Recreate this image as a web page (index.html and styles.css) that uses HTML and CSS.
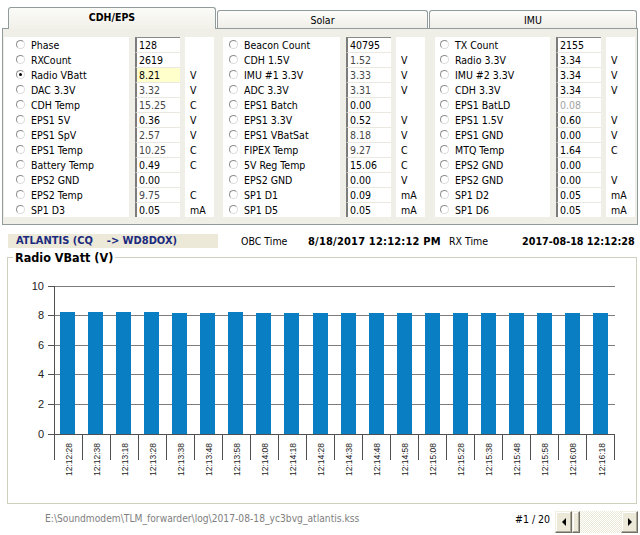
FILE: index.html
```html
<!DOCTYPE html>
<html>
<head>
<meta charset="utf-8">
<link rel="stylesheet" href="styles.css">
</head>
<body>
<div class="tabs">
  <div class="tab tab-active">CDH/EPS</div>
  <div class="tab tab-solar">Solar</div>
  <div class="tab tab-imu">IMU</div>
</div>
<div class="panel">
  <div class="col c1">
    <ul class="labels">
      <li><span class="radio"></span>Phase</li>
      <li><span class="radio"></span>RXCount</li>
      <li><span class="radio on"></span>Radio VBatt</li>
      <li><span class="radio"></span>DAC 3.3V</li>
      <li><span class="radio"></span>CDH Temp</li>
      <li><span class="radio"></span>EPS1 5V</li>
      <li><span class="radio"></span>EPS1 SpV</li>
      <li><span class="radio"></span>EPS1 Temp</li>
      <li><span class="radio"></span>Battery Temp</li>
      <li><span class="radio"></span>EPS2 GND</li>
      <li><span class="radio"></span>EPS2 Temp</li>
      <li><span class="radio"></span>SP1 D3</li>
    </ul>
    <div class="values">
      <div class="val first">128</div>
      <div class="val">2619</div>
      <div class="val sel">8.21</div>
      <div class="val dim">3.32</div>
      <div class="val dim">15.25</div>
      <div class="val">0.36</div>
      <div class="val dim">2.57</div>
      <div class="val dim">10.25</div>
      <div class="val">0.49</div>
      <div class="val">0.00</div>
      <div class="val dim">9.75</div>
      <div class="val">0.05</div>
    </div>
    <div class="units">
      <div class="u"></div><div class="u"></div><div class="u">V</div><div class="u">V</div>
      <div class="u">C</div><div class="u">V</div><div class="u">V</div><div class="u">C</div>
      <div class="u">C</div><div class="u"></div><div class="u">C</div><div class="u">mA</div>
    </div>
  </div>
  <div class="col c2">
    <ul class="labels">
      <li><span class="radio"></span>Beacon Count</li>
      <li><span class="radio"></span>CDH 1.5V</li>
      <li><span class="radio"></span>IMU #1 3.3V</li>
      <li><span class="radio"></span>ADC 3.3V</li>
      <li><span class="radio"></span>EPS1 Batch</li>
      <li><span class="radio"></span>EPS1 3.3V</li>
      <li><span class="radio"></span>EPS1 VBatSat</li>
      <li><span class="radio"></span>FIPEX Temp</li>
      <li><span class="radio"></span>5V Reg Temp</li>
      <li><span class="radio"></span>EPS2 GND</li>
      <li><span class="radio"></span>SP1 D1</li>
      <li><span class="radio"></span>SP1 D5</li>
    </ul>
    <div class="values">
      <div class="val first">40795</div>
      <div class="val dim">1.52</div>
      <div class="val dim">3.33</div>
      <div class="val dim">3.31</div>
      <div class="val">0.00</div>
      <div class="val">0.52</div>
      <div class="val dim">8.18</div>
      <div class="val dim">9.27</div>
      <div class="val">15.06</div>
      <div class="val">0.00</div>
      <div class="val">0.09</div>
      <div class="val">0.05</div>
    </div>
    <div class="units">
      <div class="u"></div><div class="u">V</div><div class="u">V</div><div class="u">V</div>
      <div class="u"></div><div class="u">V</div><div class="u">V</div><div class="u">C</div>
      <div class="u">C</div><div class="u">V</div><div class="u">mA</div><div class="u">mA</div>
    </div>
  </div>
  <div class="col c3">
    <ul class="labels">
      <li><span class="radio"></span>TX Count</li>
      <li><span class="radio"></span>Radio 3.3V</li>
      <li><span class="radio"></span>IMU #2 3.3V</li>
      <li><span class="radio"></span>CDH 3.3V</li>
      <li><span class="radio"></span>EPS1 BatLD</li>
      <li><span class="radio"></span>EPS1 1.5V</li>
      <li><span class="radio"></span>EPS1 GND</li>
      <li><span class="radio"></span>MTQ Temp</li>
      <li><span class="radio"></span>EPS2 GND</li>
      <li><span class="radio"></span>EPS2 GND</li>
      <li><span class="radio"></span>SP1 D2</li>
      <li><span class="radio"></span>SP1 D6</li>
    </ul>
    <div class="values">
      <div class="val first">2155</div>
      <div class="val">3.34</div>
      <div class="val">3.34</div>
      <div class="val">3.34</div>
      <div class="val faint">0.08</div>
      <div class="val">0.60</div>
      <div class="val">0.00</div>
      <div class="val">1.64</div>
      <div class="val">0.00</div>
      <div class="val">0.00</div>
      <div class="val">0.05</div>
      <div class="val">0.05</div>
    </div>
    <div class="units">
      <div class="u"></div><div class="u">V</div><div class="u">V</div><div class="u">V</div>
      <div class="u"></div><div class="u">V</div><div class="u">V</div><div class="u">C</div>
      <div class="u"></div><div class="u">V</div><div class="u">mA</div><div class="u">mA</div>
    </div>
  </div>
</div>
<div class="status">
  <div class="callsign">ATLANTIS (CQ    -&gt; WD8DOX)</div>
  <div class="slabel obc-l">OBC Time</div>
  <div class="sval obc-v">8/18/2017 12:12:12 PM</div>
  <div class="slabel rx-l">RX Time</div>
  <div class="sval rx-v">2017-08-18 12:12:28</div>
</div>
<fieldset class="chart-box">
  <legend>Radio VBatt (V)</legend>
  <svg class="chart" width="629" height="238" viewBox="0 0 629 238">
    <g transform="translate(-8 -265)">
      <g class="grid">
        <line x1="54" y1="286.5" x2="615" y2="286.5"/>
        <line x1="54" y1="315.5" x2="615" y2="315.5"/>
        <line x1="54" y1="345.5" x2="615" y2="345.5"/>
        <line x1="54" y1="374.5" x2="615" y2="374.5"/>
        <line x1="54" y1="404.5" x2="615" y2="404.5"/>
      </g>
      <g class="bars">
        <rect x="60" y="312" width="15" height="122"/>
        <rect x="88" y="312" width="15" height="122"/>
        <rect x="116" y="312" width="15" height="122"/>
        <rect x="144" y="312" width="15" height="122"/>
        <rect x="172" y="313" width="15" height="121"/>
        <rect x="200" y="313" width="15" height="121"/>
        <rect x="228" y="312" width="15" height="122"/>
        <rect x="256" y="313" width="15" height="121"/>
        <rect x="284" y="313" width="15" height="121"/>
        <rect x="313" y="313" width="15" height="121"/>
        <rect x="341" y="313" width="15" height="121"/>
        <rect x="369" y="313" width="15" height="121"/>
        <rect x="397" y="313" width="15" height="121"/>
        <rect x="425" y="313" width="15" height="121"/>
        <rect x="453" y="313" width="15" height="121"/>
        <rect x="481" y="313" width="15" height="121"/>
        <rect x="509" y="313" width="15" height="121"/>
        <rect x="537" y="313" width="15" height="121"/>
        <rect x="565" y="313" width="15" height="121"/>
        <rect x="593" y="313" width="15" height="121"/>
      </g>
      <g class="axis">
        <line x1="54.5" y1="286" x2="54.5" y2="460"/>
        <line x1="48" y1="434.5" x2="615" y2="434.5"/>
        <line x1="48" y1="286.5" x2="54" y2="286.5"/>
        <line x1="48" y1="315.5" x2="54" y2="315.5"/>
        <line x1="48" y1="345.5" x2="54" y2="345.5"/>
        <line x1="48" y1="374.5" x2="54" y2="374.5"/>
        <line x1="48" y1="404.5" x2="54" y2="404.5"/>
        <line x1="82.5" y1="434" x2="82.5" y2="460"/>
        <line x1="110.5" y1="434" x2="110.5" y2="460"/>
        <line x1="138.5" y1="434" x2="138.5" y2="460"/>
        <line x1="166.5" y1="434" x2="166.5" y2="460"/>
        <line x1="194.5" y1="434" x2="194.5" y2="460"/>
        <line x1="222.5" y1="434" x2="222.5" y2="460"/>
        <line x1="250.5" y1="434" x2="250.5" y2="460"/>
        <line x1="278.5" y1="434" x2="278.5" y2="460"/>
        <line x1="306.5" y1="434" x2="306.5" y2="460"/>
        <line x1="334.5" y1="434" x2="334.5" y2="460"/>
        <line x1="362.5" y1="434" x2="362.5" y2="460"/>
        <line x1="390.5" y1="434" x2="390.5" y2="460"/>
        <line x1="418.5" y1="434" x2="418.5" y2="460"/>
        <line x1="446.5" y1="434" x2="446.5" y2="460"/>
        <line x1="474.5" y1="434" x2="474.5" y2="460"/>
        <line x1="502.5" y1="434" x2="502.5" y2="460"/>
        <line x1="530.5" y1="434" x2="530.5" y2="460"/>
        <line x1="558.5" y1="434" x2="558.5" y2="460"/>
        <line x1="586.5" y1="434" x2="586.5" y2="460"/>
        <line x1="614.5" y1="434" x2="614.5" y2="460"/>
      </g>
      <g class="ylabels">
        <text x="44" y="290">10</text>
        <text x="44" y="319">8</text>
        <text x="44" y="349">6</text>
        <text x="44" y="378">4</text>
        <text x="44" y="408">2</text>
        <text x="44" y="438">0</text>
      </g>
      <g class="xlabels">
        <text transform="translate(71.5 443) rotate(-90)">12:12:28</text>
        <text transform="translate(99.6 443) rotate(-90)">12:12:38</text>
        <text transform="translate(127.6 443) rotate(-90)">12:13:18</text>
        <text transform="translate(155.7 443) rotate(-90)">12:13:28</text>
        <text transform="translate(183.7 443) rotate(-90)">12:13:38</text>
        <text transform="translate(211.8 443) rotate(-90)">12:13:48</text>
        <text transform="translate(239.8 443) rotate(-90)">12:13:58</text>
        <text transform="translate(267.9 443) rotate(-90)">12:14:08</text>
        <text transform="translate(295.9 443) rotate(-90)">12:14:18</text>
        <text transform="translate(324 443) rotate(-90)">12:14:28</text>
        <text transform="translate(352 443) rotate(-90)">12:14:38</text>
        <text transform="translate(380.1 443) rotate(-90)">12:14:48</text>
        <text transform="translate(408.1 443) rotate(-90)">12:14:58</text>
        <text transform="translate(436.2 443) rotate(-90)">12:15:08</text>
        <text transform="translate(464.2 443) rotate(-90)">12:15:28</text>
        <text transform="translate(492.3 443) rotate(-90)">12:15:38</text>
        <text transform="translate(520.3 443) rotate(-90)">12:15:48</text>
        <text transform="translate(548.4 443) rotate(-90)">12:15:58</text>
        <text transform="translate(576.4 443) rotate(-90)">12:16:08</text>
        <text transform="translate(604.5 443) rotate(-90)">12:16:18</text>
      </g>
    </g>
  </svg>
</fieldset>
<div class="footer">
  <div class="path">E:\Soundmodem\TLM_forwarder\log\2017-08-18_yc3bvg_atlantis.kss</div>
  <div class="page">#1 / 20</div>
  <div class="scroll">
    <div class="sb-btn"><span class="arrow-l"></span></div>
    <div class="sb-thumb"></div>
    <div class="sb-track"></div>
    <div class="sb-btn"><span class="arrow-r"></span></div>
  </div>
</div>
</body>
</html>
```
FILE: styles.css
```css
html, body {
  margin: 0;
  padding: 0;
}
body {
  width: 640px;
  height: 535px;
  overflow: hidden;
  background: #ffffff;
  font-family: "DejaVu Sans Condensed", "DejaVu Sans", sans-serif;
  font-stretch: condensed;
  font-size: 10.5px;
  color: #000;
}

/* ---------- tabs ---------- */
.tabs {
  display: flex;
  align-items: flex-end;
  height: 28px;
  padding: 7px 0 0 8px;
  box-sizing: border-box;
}
.tab {
  box-sizing: border-box;
  border: 1px solid #919b9c;
  border-bottom: none;
  border-radius: 3px 3px 0 0;
  background: linear-gradient(#fdfdfb, #efeee8);
  display: flex;
  align-items: center;
  justify-content: center;
  font-size: 10.5px;
}
.tab-active {
  width: 208px;
  height: 22px;
  margin-bottom: -1px;
  position: relative;
  z-index: 1;
  font-weight: bold;
  background: linear-gradient(#fbfbf8, #f1f0e9);
  padding-bottom: 3px;
}
.tab-solar {
  width: 211px;
  height: 18px;
  margin-left: 1px;
}
.tab-imu {
  width: 208px;
  height: 18px;
  margin-left: 1px;
}

/* ---------- data panel ---------- */
.panel {
  margin: 0 2px;
  border: 1px solid #919b9c;
  background: #f0efe7;
  padding: 8px 0 7px 1px;
  display: flex;
  height: 197px;
  box-sizing: border-box;
}
.col {
  display: flex;
}
.c1 { width: 210px; }
.c2 { width: 202px; margin-left: 9px; }
.c3 { width: 200px; margin-left: 10px; }

.labels {
  list-style: none;
  margin: 0;
  background: #fff;
  box-sizing: border-box;
}
.c1 .labels { width: 125px; padding: 0 0 0 12px; }
.c2 .labels { width: 117px; padding: 0 0 0 6px; }
.c3 .labels { width: 115px; padding: 0 0 0 5px; }
.labels li {
  height: 15px;
  display: flex;
  align-items: center;
  white-space: nowrap;
}
.radio {
  flex: none;
  position: relative;
  width: 9px;
  height: 9px;
  box-sizing: border-box;
  border-radius: 50%;
  border: 1px solid;
  border-color: #8d8d8d #dcdcdc #dcdcdc #8d8d8d;
  margin-right: 6px;
}
.radio.on::after {
  content: "";
  position: absolute;
  left: 2px;
  top: 2px;
  width: 3px;
  height: 3px;
  border-radius: 50%;
  background: #000;
}

.values {
  width: 45px;
  margin-left: 6px;
  background: #fff;
}
.val {
  height: 15px;
  box-sizing: border-box;
  border-left: 2px solid #7d7d7d;
  border-top: 1px solid #ebe9df;
  padding-left: 2px;
  line-height: 15px;
  white-space: nowrap;
}
.val.first { border-top-color: #8a8a8a; }
.val.sel { background: #ffffcc; }
.val.dim { color: #474747; }
.val.faint { color: #a3a3a3; }

.units {
  width: 29px;
  margin-left: 5px;
  background: #fff;
}
.u {
  height: 15px;
  line-height: 16px;
  padding-left: 5px;
}

/* ---------- status line ---------- */
.status {
  display: flex;
  align-items: center;
  height: 25px;
  padding: 9px 0 2px 8px;
  box-sizing: border-box;
  white-space: nowrap;
}
.callsign {
  width: 210px;
  height: 14px;
  line-height: 14px;
  box-sizing: border-box;
  padding-left: 8px;
  background: #ece9d8;
  color: #1b2a7e;
  font-weight: bold;
  font-size: 11px;
  white-space: pre;
}
.slabel { font-size: 10.5px; }
.sval { font-weight: bold; font-size: 11px; }
.obc-l { margin-left: 23px; width: 67px; }
.obc-v { width: 141px; letter-spacing: 0.2px; }
.rx-l { width: 73px; }
.rx-v { font-size: 10.7px; }

/* ---------- chart group box ---------- */
.chart-box {
  margin: 0 3px 0 7px;
  padding: 0;
  border: 1px solid #d0d0bf;
  min-inline-size: 0;
}
.chart-box legend {
  margin-left: 5px;
  padding: 0 2px;
  font-weight: bold;
  font-size: 12.5px;
  line-height: 15px;
}
.chart {
  display: block;
}
.grid line {
  stroke: #7c7c7c;
  stroke-width: 1;
}
.bars rect {
  fill: #0a7ec2;
}
.axis line {
  stroke: #505050;
  stroke-width: 1;
}
.ylabels text {
  font-family: "Liberation Sans", Arial, sans-serif;
  font-size: 11px;
  fill: #222;
  text-anchor: end;
}
.xlabels text {
  font-family: "Liberation Sans", Arial, sans-serif;
  font-size: 8.5px;
  fill: #222;
  text-anchor: end;
}

/* ---------- footer ---------- */
.footer {
  display: flex;
  height: 31px;
  padding-top: 7px;
  box-sizing: border-box;
  white-space: nowrap;
}
.path {
  margin-left: 45px;
  width: 470px;
  color: #808080;
  font-size: 10.2px;
  line-height: 16px;
}
.page {
  width: 40px;
  line-height: 16px;
  font-size: 10.5px;
}
.scroll {
  display: flex;
  width: 83px;
  height: 22px;
}
.sb-btn,
.sb-thumb {
  box-sizing: border-box;
  background: #ece9d8;
  border: 1px solid;
  border-color: #f1efe2 #716f64 #716f64 #f1efe2;
  box-shadow: inset -1px -1px #aca899, inset 1px 1px #ffffff;
}
.sb-btn {
  width: 17px;
  display: flex;
  align-items: center;
  justify-content: center;
}
.sb-thumb {
  width: 8px;
}
.sb-track {
  flex: 1;
  background: repeating-conic-gradient(#ffffff 0 25%, #ece9d8 0 50%) 0 0 / 2px 2px;
}
.arrow-l {
  width: 0;
  height: 0;
  border-top: 4px solid transparent;
  border-bottom: 4px solid transparent;
  border-right: 4px solid #000;
}
.arrow-r {
  width: 0;
  height: 0;
  border-top: 4px solid transparent;
  border-bottom: 4px solid transparent;
  border-left: 4px solid #000;
}
```
